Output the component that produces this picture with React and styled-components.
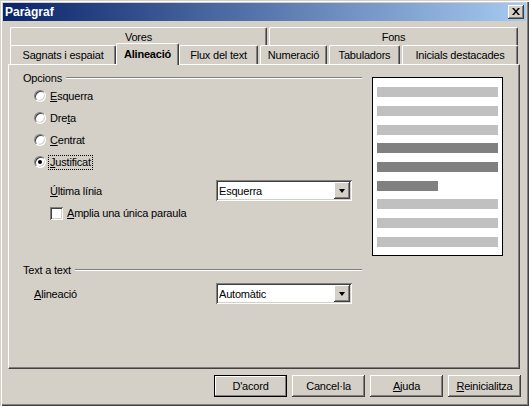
import React from 'react'
import styled, { createGlobalStyle } from 'styled-components'

const GlobalStyle = createGlobalStyle`
  html, body {
    margin: 0;
    padding: 0;
    background: #d4d0c8;
  }
  body {
    font-family: "Liberation Sans", Arial, sans-serif;
    font-size: 11px;
    letter-spacing: -0.2px;
    color: #000;
  }
`

const raised = `
  box-shadow: inset -1px -1px #404040, inset 1px 1px #fff,
    inset -2px -2px #808080, inset 2px 2px #d4d0c8;
`

const sunken = `
  box-shadow: inset 1px 1px #808080, inset -1px -1px #fff,
    inset 2px 2px #404040, inset -2px -2px #d4d0c8;
`

const Window = styled.div`
  width: 529px;
  height: 406px;
  box-sizing: border-box;
  padding: 3px;
  background: #d4d0c8;
  box-shadow: inset 1px 1px #d4d0c8, inset 2px 2px #fff,
    inset -1px -1px #404040, inset -2px -2px #808080;
  display: flex;
  flex-direction: column;
`

const TitleBar = styled.div`
  height: 18px;
  display: flex;
  align-items: center;
  justify-content: space-between;
  padding: 0 2px;
  background: linear-gradient(to right, #0a246a, #a6caf0);
`

const Title = styled.span`
  color: #fff;
  font-weight: bold;
  font-size: 12px;
  letter-spacing: 0;
`

const CloseButton = styled.div`
  width: 16px;
  height: 14px;
  box-sizing: border-box;
  background: #d4d0c8;
  ${raised}
  display: flex;
  align-items: center;
  justify-content: center;
  padding-bottom: 1px;
`

const Tabs = styled.div`
  margin-top: 6px;
  padding-left: 7px;
`

const TabRow = styled.div`
  display: flex;
  align-items: flex-end;
  gap: 2px;
  height: ${p => p.$height}px;
`

const Tab = styled.div`
  position: relative;
  width: ${p => p.$width}px;
  height: 100%;
  box-sizing: border-box;
  border-top: 1px solid #fff;
  border-left: 1px solid #fff;
  border-right: 1px solid #404040;
  border-radius: 2px 2px 0 0;
  box-shadow: inset -1px 0 #808080;
  background: #d4d0c8;
  display: flex;
  align-items: center;
  justify-content: center;
  white-space: nowrap;
`

const ActiveTab = styled(Tab)`
  z-index: 1;
  height: 22px;
  width: ${p => p.$width + 4}px;
  margin: 0 -2px -1px;
  font-weight: bold;
  padding-bottom: 2px;
`

const Panel = styled.div`
  margin-left: 5px;
  width: 512px;
  height: 305px;
  box-sizing: border-box;
  border-top: 1px solid #fff;
  border-left: 1px solid #fff;
  border-right: 1px solid #404040;
  border-bottom: 1px solid #404040;
  box-shadow: inset -1px -1px #808080;
  padding: 6px 0 0 14px;
`

const TopRow = styled.div`
  display: flex;
  align-items: flex-start;
`

const Group = styled.div`
  width: 339px;
  display: flex;
  flex-direction: column;
`

const GroupHeader = styled.div`
  height: 14px;
  display: flex;
  align-items: center;
  gap: 4px;
  &::after {
    content: "";
    flex: 1;
    height: 0;
    border-top: 1px solid #808080;
    border-bottom: 1px solid #fff;
  }
`

const RadioRow = styled.div`
  height: 22px;
  display: flex;
  align-items: center;
  gap: 4px;
  padding-left: 11px;
`

const Radio = styled.span`
  width: 12px;
  height: 12px;
  box-sizing: border-box;
  border-radius: 50%;
  background: #fff;
  border: 1px solid;
  border-color: #808080 #fff #fff #808080;
  box-shadow: inset 1px 1px #404040, inset -1px -1px #d4d0c8;
  display: flex;
  align-items: center;
  justify-content: center;
  &::after {
    content: "";
    width: 4px;
    height: 4px;
    border-radius: 50%;
    background: ${p => (p.$checked ? '#000' : 'transparent')};
  }
`

const Focus = styled.span`
  border: 1px dotted #000;
  padding: 0 1px;
  margin-left: -2px;
  line-height: 13px;
`

const FieldRow = styled.div`
  margin-top: ${p => p.$top}px;
  height: 21px;
  display: flex;
  align-items: center;
  padding-left: ${p => p.$indent}px;
`

const FieldLabel = styled.span`
  width: ${p => p.$width}px;
`

const CheckRow = styled.div`
  margin-top: 1px;
  height: 22px;
  display: flex;
  align-items: center;
  gap: 4px;
  padding-left: 27px;
`

const Checkbox = styled.span`
  width: 13px;
  height: 13px;
  box-sizing: border-box;
  background: #fff;
  ${sunken}
`

const Select = styled.div`
  width: 136px;
  height: 21px;
  box-sizing: border-box;
  padding: 2px;
  background: #fff;
  ${sunken}
  display: flex;
  align-items: center;
`

const SelectText = styled.span`
  flex: 1;
  padding-left: 1px;
`

const SelectArrow = styled.span`
  width: 16px;
  height: 17px;
  box-sizing: border-box;
  background: #d4d0c8;
  ${raised}
  display: flex;
  align-items: center;
  justify-content: center;
  &::after {
    content: "";
    border-left: 3.5px solid transparent;
    border-right: 3.5px solid transparent;
    border-top: 4px solid #000;
  }
`

const Preview = styled.div`
  margin: 6px 0 0 10px;
  width: 131px;
  height: 179px;
  box-sizing: border-box;
  border: 1px solid #000;
  background: #fff;
  padding: 9px 4px 0;
  display: flex;
  flex-direction: column;
  align-items: flex-start;
`

const Bar = styled.div`
  height: 10px;
  margin-top: ${p => p.$gap}px;
  width: ${p => (p.$short ? '61px' : '100%')};
  background: ${p => (p.$dark ? '#808080' : '#c0c0c0')};
`

const Section = styled.div`
  margin-top: 7px;
  width: 339px;
`

const ButtonBar = styled.div`
  margin-top: 6px;
  display: flex;
  justify-content: flex-end;
  gap: 5px;
  padding-right: 5px;
`

const Button = styled.div`
  width: 73px;
  height: 22px;
  box-sizing: border-box;
  background: #d4d0c8;
  display: flex;
  align-items: center;
  justify-content: center;
  ${p => p.$default ? `
    border: 1px solid #000;
    box-shadow: inset -1px -1px #808080, inset 1px 1px #fff;
  ` : raised}
`

const bars = [
  { gap: 0 }, { gap: 9 }, { gap: 9 },
  { gap: 8, dark: true }, { gap: 9, dark: true }, { gap: 9, dark: true, short: true },
  { gap: 8 }, { gap: 9 }, { gap: 9 },
]

const rowOne = [
  { label: 'Vores', width: 257 },
  { label: 'Fons', width: 249 },
]

const rowTwo = [
  { label: 'Sagnats i espaiat', width: 106 },
  { label: 'Alineació', width: 59, active: true },
  { label: 'Flux del text', width: 79 },
  { label: 'Numeració', width: 67 },
  { label: 'Tabuladors', width: 71 },
  { label: 'Inicials destacades', width: 116 },
]

const Dropdown = ({ value }) => (
  <Select>
    <SelectText>{value}</SelectText>
    <SelectArrow />
  </Select>
)

export default function App() {
  return (
    <>
      <GlobalStyle />
      <Window>
        <TitleBar>
          <Title>Paràgraf</Title>
          <CloseButton>
            <svg width="8" height="7" viewBox="0 0 8 7">
              <path d="M0 0h2l2 2.4 2-2.4h2l-3 3.5 3 3.5h-2l-2-2.4-2 2.4h-2l3-3.5z" fill="#000" />
            </svg>
          </CloseButton>
        </TitleBar>

        <Tabs>
          <TabRow $height={18}>
            {rowOne.map(t => <Tab key={t.label} $width={t.width}>{t.label}</Tab>)}
          </TabRow>
          <TabRow $height={19}>
            {rowTwo.map(t => t.active
              ? <ActiveTab key={t.label} $width={t.width}>{t.label}</ActiveTab>
              : <Tab key={t.label} $width={t.width}>{t.label}</Tab>)}
          </TabRow>
        </Tabs>

        <Panel>
          <TopRow>
            <Group>
              <GroupHeader>Opcions</GroupHeader>
              <RadioRow><Radio /><span><u>E</u>squerra</span></RadioRow>
              <RadioRow><Radio /><span>Dre<u>t</u>a</span></RadioRow>
              <RadioRow><Radio /><span><u>C</u>entrat</span></RadioRow>
              <RadioRow><Radio $checked /><Focus><u>J</u>ustificat</Focus></RadioRow>
              <FieldRow $top={7} $indent={27}>
                <FieldLabel $width={166}><u>Ú</u>ltima línia</FieldLabel>
                <Dropdown value="Esquerra" />
              </FieldRow>
              <CheckRow><Checkbox /><span><u>A</u>mplia una única paraula</span></CheckRow>
            </Group>
            <Preview>
              {bars.map((b, i) => <Bar key={i} $gap={b.gap} $dark={b.dark} $short={b.short} />)}
            </Preview>
          </TopRow>

          <Section>
            <GroupHeader>Text a text</GroupHeader>
            <FieldRow $top={6} $indent={11}>
              <FieldLabel $width={182}><u>A</u>lineació</FieldLabel>
              <Dropdown value="Automàtic" />
            </FieldRow>
          </Section>
        </Panel>

        <ButtonBar>
          <Button $default>D'acord</Button>
          <Button>Cancel·la</Button>
          <Button><span><u>A</u>juda</span></Button>
          <Button><span><u>R</u>einicialitza</span></Button>
        </ButtonBar>
      </Window>
    </>
  )
}
